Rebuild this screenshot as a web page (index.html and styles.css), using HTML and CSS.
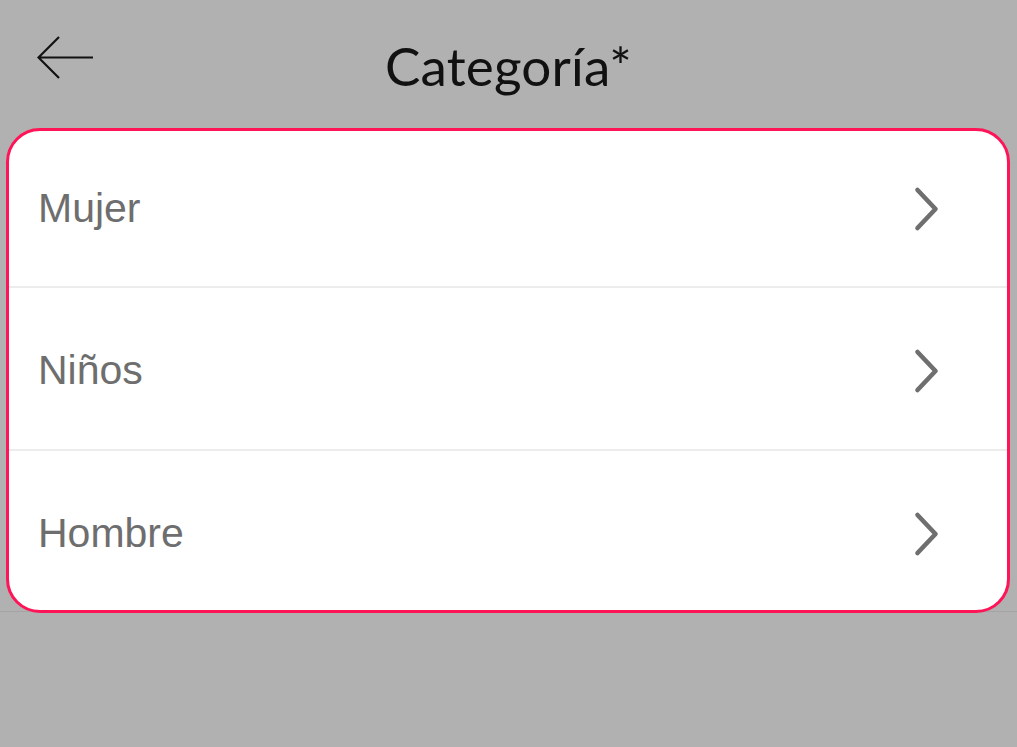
FILE: index.html
```html
<!DOCTYPE html>
<html lang="es">
<head>
  <meta charset="UTF-8">
  <title>Categoría</title>
  <link rel="stylesheet" href="styles.css">
</head>
<body>
  <div class="header">
    <div class="back">
      <svg width="58" height="46" viewBox="0 0 58 46">
        <path d="M56 22.5 H2 M22 2 L1.5 22.5 L22 43" fill="none" stroke="#111" stroke-width="2.2"/>
      </svg>
    </div>
    <h1>Categoría*</h1>
    <div></div>
  </div>

  <div class="sheet">
    <div class="card">
      <div class="row">
        <span>Mujer</span>
        <svg class="chev" width="26" height="46" viewBox="0 0 26 46"><path d="M3.5 4 L21.5 23 L3.5 42" fill="none" stroke="#6f6f6f" stroke-width="4.6" stroke-linecap="round" stroke-linejoin="round"/></svg>
      </div>
      <div class="row">
        <span>Niños</span>
        <svg class="chev" width="26" height="46" viewBox="0 0 26 46"><path d="M3.5 4 L21.5 23 L3.5 42" fill="none" stroke="#6f6f6f" stroke-width="4.6" stroke-linecap="round" stroke-linejoin="round"/></svg>
      </div>
      <div class="row">
        <span>Hombre</span>
        <svg class="chev" width="26" height="46" viewBox="0 0 26 46"><path d="M3.5 4 L21.5 23 L3.5 42" fill="none" stroke="#6f6f6f" stroke-width="4.6" stroke-linecap="round" stroke-linejoin="round"/></svg>
      </div>
    </div>
  </div>
</body>
</html>
```

FILE: styles.css
```css
body {
  margin: 0;
  background: #b1b1b1;
  font-family: "Liberation Sans", Arial, sans-serif;
  height: 747px;
  overflow: hidden;
}
.header {
  display: grid;
  grid-template-columns: 1fr auto 1fr;
  align-items: start;
  height: 128px;
}
.back {
  padding: 35px 0 0 37px;
}
.back svg {
  display: block;
}
h1 {
  margin: 0;
  padding-top: 36px;
  font-family: "Lato", sans-serif;
  font-weight: 400;
  font-size: 53px;
  letter-spacing: 0.2px;
  line-height: 60px;
  color: #111;
}
.sheet {
  border-bottom: 1px solid #a4a4a4;
}
.card {
  margin: 0 7px -2px 6px;
  background: #fff;
  border: 3.5px solid #ff1458;
  border-radius: 34px;
  overflow: hidden;
}
.row {
  display: flex;
  align-items: center;
  justify-content: space-between;
  box-sizing: border-box;
  height: 163px;
  padding: 4px 67px 0 29px;
  border-top: 2px solid #ececec;
  font-size: 41px;
  color: #6e6e6e;
}
.row:first-child {
  border-top: none;
  height: 155px;
  padding-top: 0;
}
.row:last-child {
  height: 161px;
  padding-top: 6px;
}
.chev {
  display: block;
}
```
